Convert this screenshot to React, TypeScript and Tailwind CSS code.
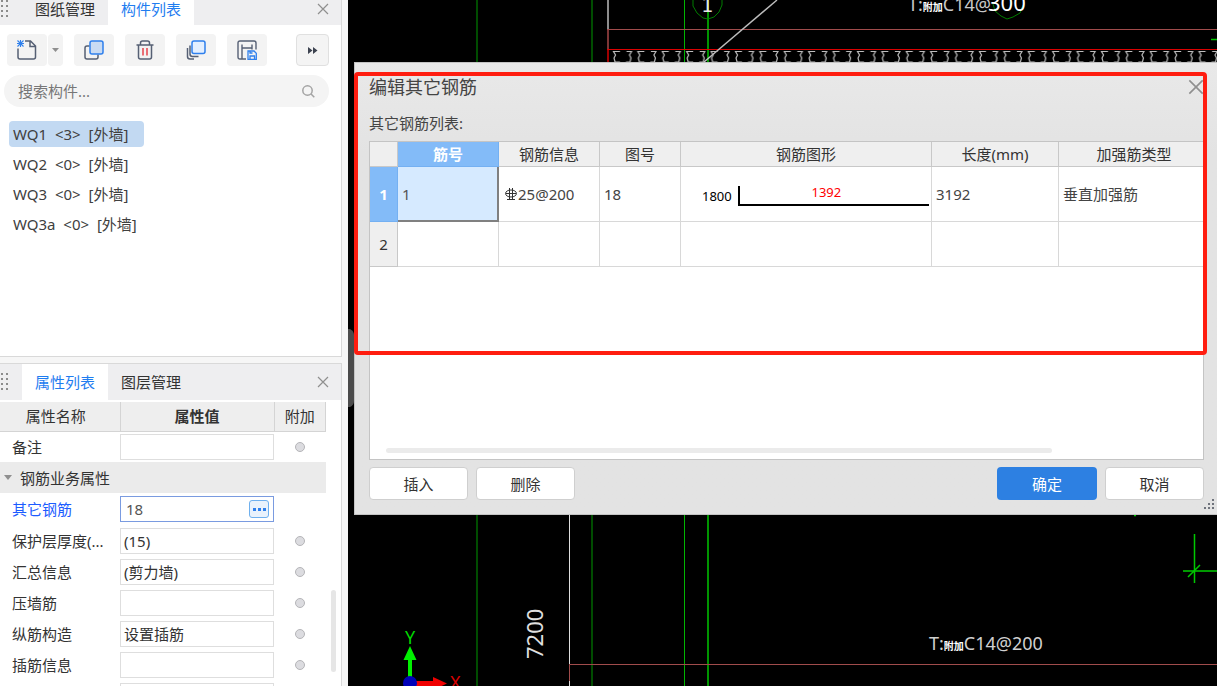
import { useState } from 'react'
import type { ReactNode } from 'react'

const toolButton =
  'flex h-8 w-10 items-center justify-center rounded bg-[#f3f3f3] hover:bg-[#e8e8ea]'

const components = [
  { name: 'WQ1', count: 3, type: '外墙' },
  { name: 'WQ2', count: 0, type: '外墙' },
  { name: 'WQ3', count: 0, type: '外墙' },
  { name: 'WQ3a', count: 0, type: '外墙' },
]

const rebarProps = [
  { id: 'cover', label: '保护层厚度(...', value: '(15)' },
  { id: 'summary', label: '汇总信息', value: '(剪力墙)' },
  { id: 'press', label: '压墙筋', value: '' },
  { id: 'vertical', label: '纵筋构造', value: '设置插筋' },
  { id: 'dowel', label: '插筋信息', value: '' },
  { id: 'extra', label: '', value: '' },
]

function Grip() {
  return (
    <svg width="10" height="18" className="shrink-0" fill="#8b8b8b" aria-hidden="true">
      {[0, 5, 10, 15].map((y) => (
        <g key={y}>
          <rect x="1" y={y} width="2" height="2" />
          <rect x="6" y={y} width="2" height="2" />
        </g>
      ))}
    </svg>
  )
}

function CloseIcon({ size }: { size: number }) {
  return (
    <svg width={size} height={size} viewBox="0 0 12 12" stroke="#8f8f8f" strokeWidth="1.2" aria-hidden="true">
      <path d="M1 1l10 10M11 1L1 11" />
    </svg>
  )
}

interface PanelTabsProps {
  tabs: string[]
  active: string
  onSelect: (tab: string) => void
  compact?: boolean
}

function PanelTabs({ tabs, active, onSelect, compact }: PanelTabsProps) {
  return (
    <div className={`flex shrink-0 items-center bg-[#eeeef0] pr-3 ${compact ? 'h-[25px] pb-2 leading-4' : 'h-9'}`}>
      <Grip />
      <div role="tablist" className={`ml-3 flex flex-1 ${compact ? '-mb-2 h-[25px]' : 'h-full'}`}>
        {tabs.map((tab) => (
          <button
            key={tab}
            type="button"
            role="tab"
            aria-selected={tab === active}
            onClick={() => onSelect(tab)}
            className={`h-full px-[13px] ${compact ? 'pb-2' : ''} ${
              tab === active ? 'bg-white text-[#1f7df0]' : 'text-[#333333]'
            }`}
          >
            {tab}
          </button>
        ))}
      </div>
      <button type="button" aria-label="关闭">
        <CloseIcon size={12} />
      </button>
    </div>
  )
}

function Toolbar() {
  return (
    <div className="flex items-center gap-[11px] pl-[7px] pr-3">
      <div className="flex gap-px">
        <button type="button" aria-label="新建" className={toolButton}>
          <svg width="20" height="20" viewBox="0 0 20 20" fill="none" stroke="#566074" strokeWidth="1.5">
            <path d="M1 8.5V17q0 2 2 2h13.500q2 0 2-2V6l-5-5H8M13 1v5.500h5.500" />
            <path d="M3.500 0v7M0.500 0.500l6 6M6.500 0.500l-6 6M0 3.500h7" stroke="#2f80ed" strokeWidth="1.100" />
          </svg>
        </button>
        <button type="button" aria-label="新建选项" className="flex h-8 w-[15px] items-center justify-center rounded bg-[#f3f3f3]">
          <svg width="7" height="4" fill="#8f8f8f"><path d="M0 0h7L3.500 4z" /></svg>
        </button>
      </div>
      <button type="button" aria-label="复制" className={toolButton}>
        <svg width="20" height="20" viewBox="0 0 20 20" fill="none" stroke="#566074" strokeWidth="1.500">
          <path d="M5.500 6H3Q1 6 1 8v9q0 2 2 2h9q2 0 2-2v-2.500" />
          <rect x="6" y="1" width="13" height="13" rx="2" fill="#c9dbf3" stroke="#2f80ed" />
        </svg>
      </button>
      <button type="button" aria-label="删除构件" className={toolButton}>
        <svg width="20" height="20" viewBox="0 0 20 20" fill="none" stroke="#566074" strokeWidth="1.500">
          <path d="M1.500 5h17M5.500 4.500V3q0-2 2-2h5q2 0 2 2v1.500M3.500 5v12q0 2 2 2h9q2 0 2-2V5" />
          <path d="M8 8v7.500M12 8v7.500" stroke="#e8434c" />
        </svg>
      </button>
      <button type="button" aria-label="层间复制" className={toolButton}>
        <svg width="20" height="20" viewBox="0 0 20 20" fill="none" stroke="#566074" strokeWidth="1.500">
          <path d="M1.500 8v8.500q0 2.500 2.500 2.500h4M4 5.500V14q0 2.500 2.500 2.500h6" />
          <rect x="6" y="1" width="13" height="12.500" rx="2" fill="#e3efff" stroke="#2f80ed" />
        </svg>
      </button>
      <button type="button" aria-label="构件存盘" className={toolButton}>
        <svg width="20" height="20" viewBox="0 0 20 20" fill="none" stroke="#566074" strokeWidth="1.400">
          <path d="M9 19H3q-2 0-2-2V3q0-2 2-2h14q2 0 2 2v6.500M5 4.500V19M5 8h10M15 4.500V9.500" />
          <path d="M11 11h6l2.300 2.300V19.300H11zM13 19v-3h4.500v3M13 11v2h2.500" stroke="#2f80ed" strokeWidth="1.300" />
        </svg>
      </button>
      <button
        type="button"
        aria-label="更多"
        className="ml-auto flex h-8 w-[33px] items-center justify-center rounded border border-[#e0e0e0] bg-[#f4f4f4]"
      >
        <svg width="10" height="7" fill="#3d4350"><path d="M0 0l4.500 3.500L0 7zM5 0l4.500 3.500L5 7z" /></svg>
      </button>
    </div>
  )
}

function ComponentPanel() {
  const [tab, setTab] = useState('构件列表')
  const [selected, setSelected] = useState('WQ1')

  return (
    <section className="flex h-[357px] shrink-0 flex-col border-b border-r border-[#d9d9d9] bg-white">
      <PanelTabs compact tabs={['图纸管理', '构件列表']} active={tab} onSelect={setTab} />
      <div className="mt-[9px]">
        <Toolbar />
      </div>
      <label className="ml-1 mr-3 mt-[9px] flex h-8 items-center rounded-full bg-[#f4f4f4] pl-3.5 pr-3.5">
        <input
          type="text"
          aria-label="搜索构件"
          placeholder="搜索构件..."
          className="min-w-0 flex-1 bg-transparent outline-none placeholder:text-[#777777]"
        />
        <svg width="13" height="13" viewBox="0 0 13 13" fill="none" stroke="#a3a3a3" strokeWidth="1.500">
          <circle cx="5.500" cy="5.500" r="4.700" />
          <path d="M9 9l3.300 3.300" />
        </svg>
      </label>
      <ul className="mt-3.5 flex flex-col items-start gap-1 pl-[9px]">
        {components.map(({ name, count, type }) => (
          <li key={name}>
            <button
              type="button"
              onClick={() => setSelected(name)}
              className={`h-[26px] rounded pl-1 pr-4 text-left text-[#404040] ${
                selected === name ? 'bg-[#c2d9f2]' : ''
              }`}
            >
              {name}&nbsp; &lt;{count}&gt;&nbsp; [{type}]
            </button>
          </li>
        ))}
      </ul>
    </section>
  )
}

function PropertyRow({ id, label, value }: { id: string; label: string; value: string }) {
  return (
    <tr className="h-[31px]">
      <th scope="row" className="p-0 pl-3 text-left font-normal whitespace-nowrap">
        <label htmlFor={id}>{label}</label>
      </th>
      <td className="p-0">
        <input
          id={id}
          type="text"
          defaultValue={value}
          className="block h-[26px] w-full border border-[#dedede] bg-white px-[3px] outline-none focus:border-[#7fa0e0]"
        />
      </td>
      <td className="p-0">
        <input
          type="radio"
          aria-label={`附加 ${label}`}
          className="mx-auto block size-2.5 appearance-none rounded-full border border-[#b5b5b8] bg-[#dcdce0]"
        />
      </td>
    </tr>
  )
}

function PropertyPanel() {
  const [tab, setTab] = useState('属性列表')

  return (
    <section className="flex min-h-0 flex-1 flex-col overflow-hidden border-r border-t border-[#d9d9d9] bg-white">
      <PanelTabs tabs={['属性列表', '图层管理']} active={tab} onSelect={setTab} />
      <div className="mt-0.5 flex min-h-0 flex-1">
        <div className="min-h-0 flex-1 overflow-hidden">
          <table className="w-full table-fixed border-collapse text-[#333333]">
            <colgroup>
              <col className="w-[120px]" />
              <col className="w-[154px]" />
              <col />
            </colgroup>
            <thead>
              <tr className="h-[29px] bg-[#eeeeee]">
                <th className="border-b border-r border-[#d4d4d4] p-0 pr-2 font-normal">属性名称</th>
                <th className="border-b border-r border-[#d4d4d4] p-0 font-bold">属性值</th>
                <th className="border-b border-r border-[#d4d4d4] p-0 font-normal">附加</th>
              </tr>
            </thead>
            <tbody>
              <PropertyRow id="remark" label="备注" value="" />
              <tr className="h-[31px] bg-[#ebebeb]">
                <th colSpan={3} className="p-0 text-left font-normal">
                  <button type="button" aria-expanded="true" className="flex items-center gap-2 pl-1">
                    <svg width="8" height="5" fill="#8f8f8f"><path d="M0 0h8L4 5z" /></svg>
                    钢筋业务属性
                  </button>
                </th>
              </tr>
              <tr className="h-8">
                <th scope="row" className="p-0 pl-3 text-left font-normal text-[#1c5cff]">
                  <label htmlFor="other">其它钢筋</label>
                </th>
                <td className="p-0">
                  <div className="flex h-[26px] items-center border border-[#7a9be0] bg-white pl-[5px] pr-1">
                    <input
                      id="other"
                      type="text"
                      defaultValue="18"
                      className="min-w-0 flex-1 bg-transparent text-[#555555] outline-none"
                    />
                    <button
                      type="button"
                      aria-label="编辑其它钢筋"
                      className="flex h-[18px] w-5 items-center justify-center gap-0.5 rounded-[3px] border border-[#6fb0ee] bg-[#e9f2fc]"
                    >
                      <span className="size-[3px] bg-[#2f80ed]" />
                      <span className="size-[3px] bg-[#2f80ed]" />
                      <span className="size-[3px] bg-[#2f80ed]" />
                    </button>
                  </div>
                </td>
                <td className="p-0" />
              </tr>
              {rebarProps.map((row) => (
                <PropertyRow key={row.id} {...row} />
              ))}
            </tbody>
          </table>
        </div>
        <div className="flex w-[15px] shrink-0 flex-col items-center justify-end pb-3.5">
          <div className="h-[82px] w-[5px] rounded-full bg-[#e6e6e6]" />
        </div>
      </div>
    </section>
  )
}

function Drawing() {
  return (
    <svg
      className="absolute inset-0 h-full w-full font-['Noto_Sans','Noto_Sans_CJK_SC',sans-serif]"
      fill="none"
      aria-label="绘图区"
    >
      <defs>
        <pattern id="hatch" x="264" y="50" width="24.400" height="14" patternUnits="userSpaceOnUse">
          <path
            d="M8 1.500H1.500L3.500 5 2 8l1 4h5M14.500 1.500h5L17.500 5 19 8l-1 4h-4"
            fill="none"
            stroke="#bdbdbd"
            strokeWidth="1.200"
          />
        </pattern>
      </defs>
      <path d="M0 329h2q4 2 4 6v66q0 4-4 6H0z" fill="#4b4b4b" />
      <path d="M129 0v686M244 0v686" stroke="#004c00" strokeWidth="2" />
      <path d="M336.500 0v686" stroke="#00b400" />
      <path d="M360 0v686" stroke="#009400" strokeWidth="2" />
      <path d="M260 0v29" stroke="#8c8c8c" strokeWidth="2" />
      <path d="M260 29v20" stroke="#7c3535" strokeWidth="2" />
      <path d="M260 49v20" stroke="#a00000" strokeWidth="2" />
      <path d="M259 29.500h2000M221.500 664.500h2000M221.500 664v17" stroke="#a04c4c" />
      <rect x="262" y="50" width="2000" height="13" fill="url(#hatch)" />
      <path d="M259 49.500h2000" stroke="#dc0000" />
      <path d="M429 0L356 62" stroke="#bdbdbd" strokeWidth="1.400" />
      <path d="M221.500 515v149M221.500 681v5" stroke="#dedede" />

      {/* Axis bubbles */}
      <path d="M345 0l0 6 4 7 6 5 5 1 6-2 5-5 3-7V0M645 4l2 7 6 5 6 3 6-2 7-4 3-8" stroke="#007c00" />
      <text x="353" y="12" fontSize="20" fill="#e6e6e6" fontFamily="DejaVu Sans Mono">1</text>

      {/* Dimension tick */}
      <path d="M835 571h2000" stroke="#009a00" strokeWidth="2" />
      <path d="M846.500 534v49M840 577l12-12M863 39.500h6M786 515.500h2" stroke="#00c800" strokeWidth="1.500" />

      <text x="560" y="11" fontSize="18" fill="#c8c8c8">
        T:<tspan fontSize="10" fontWeight="700" fill="#ffffff">附加</tspan>C14@
      </text>
      <text x="640" y="11" fontSize="22" fill="#ffffff">300</text>
      <text x="581" y="650" fontSize="18" fill="#d0d0d0">
        T:<tspan fontSize="10" fontWeight="700" fill="#ffffff">附加</tspan>C14@200
      </text>
      <text transform="translate(195 659) rotate(-90)" fontSize="22" fill="#e0e0e0">7200</text>

      {/* UCS icon */}
      <path d="M60 660h4v18h-4zM62 646l6.500 14h-13z" fill="#00f000" />
      <path d="M66 681h19v5H66zM99 683.500L85 677v13z" fill="#f00000" />
      <circle cx="62" cy="683" r="7" fill="#0000b8" />
      <text x="57" y="644" fontSize="18" fill="#00d800">Y</text>
      <text x="102" y="689" fontSize="18" fill="#d80000">X</text>
    </svg>
  )
}

function HeadCell({ children, active }: { children?: ReactNode; active?: boolean }) {
  return (
    <th
      scope="col"
      className={`border-b border-r p-0 ${
        active
          ? 'border-[#74b0f2] bg-[#83bbf8] font-bold text-white'
          : 'border-[#c8c8c8] bg-[#efefef] font-normal text-[#333333]'
      }`}
    >
      {children}
    </th>
  )
}

function Cell({ children }: { children?: ReactNode }) {
  return <td className="border-b border-r border-[#d8d8d8] p-0 pl-1 text-[#444444]">{children}</td>
}

function RebarTable() {
  return (
    <table className="w-[840px] min-w-full table-fixed border-separate border-spacing-0">
      <colgroup>
        <col className="w-7" />
        <col className="w-[101px]" />
        <col className="w-[101px]" />
        <col className="w-[81px]" />
        <col className="w-[251px]" />
        <col className="w-[127px]" />
        <col />
      </colgroup>
      <thead>
        <tr className="h-[25px]">
          <HeadCell />
          <HeadCell active>筋号</HeadCell>
          <HeadCell>钢筋信息</HeadCell>
          <HeadCell>图号</HeadCell>
          <HeadCell>钢筋图形</HeadCell>
          <HeadCell>长度(mm)</HeadCell>
          <HeadCell>加强筋类型</HeadCell>
        </tr>
      </thead>
      <tbody>
        <tr className="h-[55px]">
          <th scope="row" className="border-b border-r border-[#74b0f2] bg-[#83bbf8] p-0 font-bold text-white">
            1
          </th>
          <td className="border-b-2 border-r-2 border-[#808080] bg-[#d6eaff] p-0 pl-1 text-[#555555]">1</td>
          <Cell>
            <span className="flex items-center gap-px pl-0.5">
              <svg width="12" height="13" fill="none" stroke="#333333" aria-label="三级钢">
                <ellipse cx="6" cy="5.500" rx="5.500" ry="3.500" />
                <path d="M4.500 0v11.500M7.500 0v11.500M2 11.500h8M1 5.500h10" />
              </svg>
              25@200
            </span>
          </Cell>
          <Cell>18</Cell>
          <Cell>
            <div className="flex items-center gap-1.5 pl-[17px] pr-0.5 pt-1 text-[13px] text-black">
              1800
              <div className="h-5 flex-1 border-b-2 border-l-2 border-black pr-4 text-center leading-none text-[#ff0000]">
                1392
              </div>
            </div>
          </Cell>
          <Cell>3192</Cell>
          <Cell>垂直加强筋</Cell>
        </tr>
        <tr className="h-[45px]">
          <th scope="row" className="border-b border-r border-[#c8c8c8] bg-[#efefef] p-0 font-normal text-[#333333]">
            2
          </th>
          <Cell />
          <Cell />
          <Cell />
          <Cell />
          <Cell />
          <Cell />
        </tr>
      </tbody>
    </table>
  )
}

function RebarDialog() {
  const plain = 'h-[33px] w-[99px] rounded border border-[#cfcfcf] bg-white text-[#333333]'

  return (
    <div
      role="dialog"
      aria-labelledby="dialog-title"
      className="absolute left-1.5 right-0 top-[62px] flex flex-col border-y border-l border-[#c4c4c4] bg-linear-to-b from-[#e9e9e9] to-[#e3e3e3] to-20% pb-3.5 pl-3.5 pr-[13px]"
    >
      <header className="flex h-12 items-center justify-between">
        <h2 id="dialog-title" className="text-lg text-[#444444]">编辑其它钢筋</h2>
        <button type="button" aria-label="关闭对话框">
          <CloseIcon size={16} />
        </button>
      </header>
      <p className="mb-1.5 h-6 leading-6 text-[#444444]">其它钢筋列表:</p>
      <div className="flex h-[319px] flex-col justify-between overflow-hidden border border-[#c4c4c4] bg-white">
        <RebarTable />
        <div className="mb-1.5 ml-4 h-[5px] w-4/5 rounded-full bg-[#ebebeb]" />
      </div>
      <footer className="mt-[7px] flex gap-2">
        <button type="button" className={plain}>插入</button>
        <button type="button" className={plain}>删除</button>
        <button type="button" className="ml-auto h-[33px] w-[100px] rounded bg-[#2d80e2] text-white">确定</button>
        <button type="button" className={plain}>取消</button>
      </footer>
      {/* Resize handle */}
      <svg className="absolute bottom-1 right-0.5" width="11" height="11" fill="#6f737c" aria-hidden="true">
        <path d="M8 0h2v2H8zM4 4h2v2H4zM8 4h2v2H8zM0 8h2v2H0zM4 8h2v2H4zM8 8h2v2H8z" />
      </svg>
    </div>
  )
}

export default function App() {
  return (
    <div className="flex h-screen overflow-hidden bg-[#f6f6f6] font-['Noto_Sans','Noto_Sans_CJK_SC',sans-serif] text-[15px] leading-5">
      <aside className="flex w-[348px] shrink-0 flex-col gap-1.5 pr-1.5">
        <ComponentPanel />
        <PropertyPanel />
      </aside>
      <main className="relative min-w-0 flex-1 overflow-hidden bg-black">
        <Drawing />
        <RebarDialog />
        {/* Highlight frame */}
        <div className="pointer-events-none absolute left-1.5 right-2.5 top-[72px] h-[283px] rounded border-4 border-[#ff1d10]" />
      </main>
    </div>
  )
}
